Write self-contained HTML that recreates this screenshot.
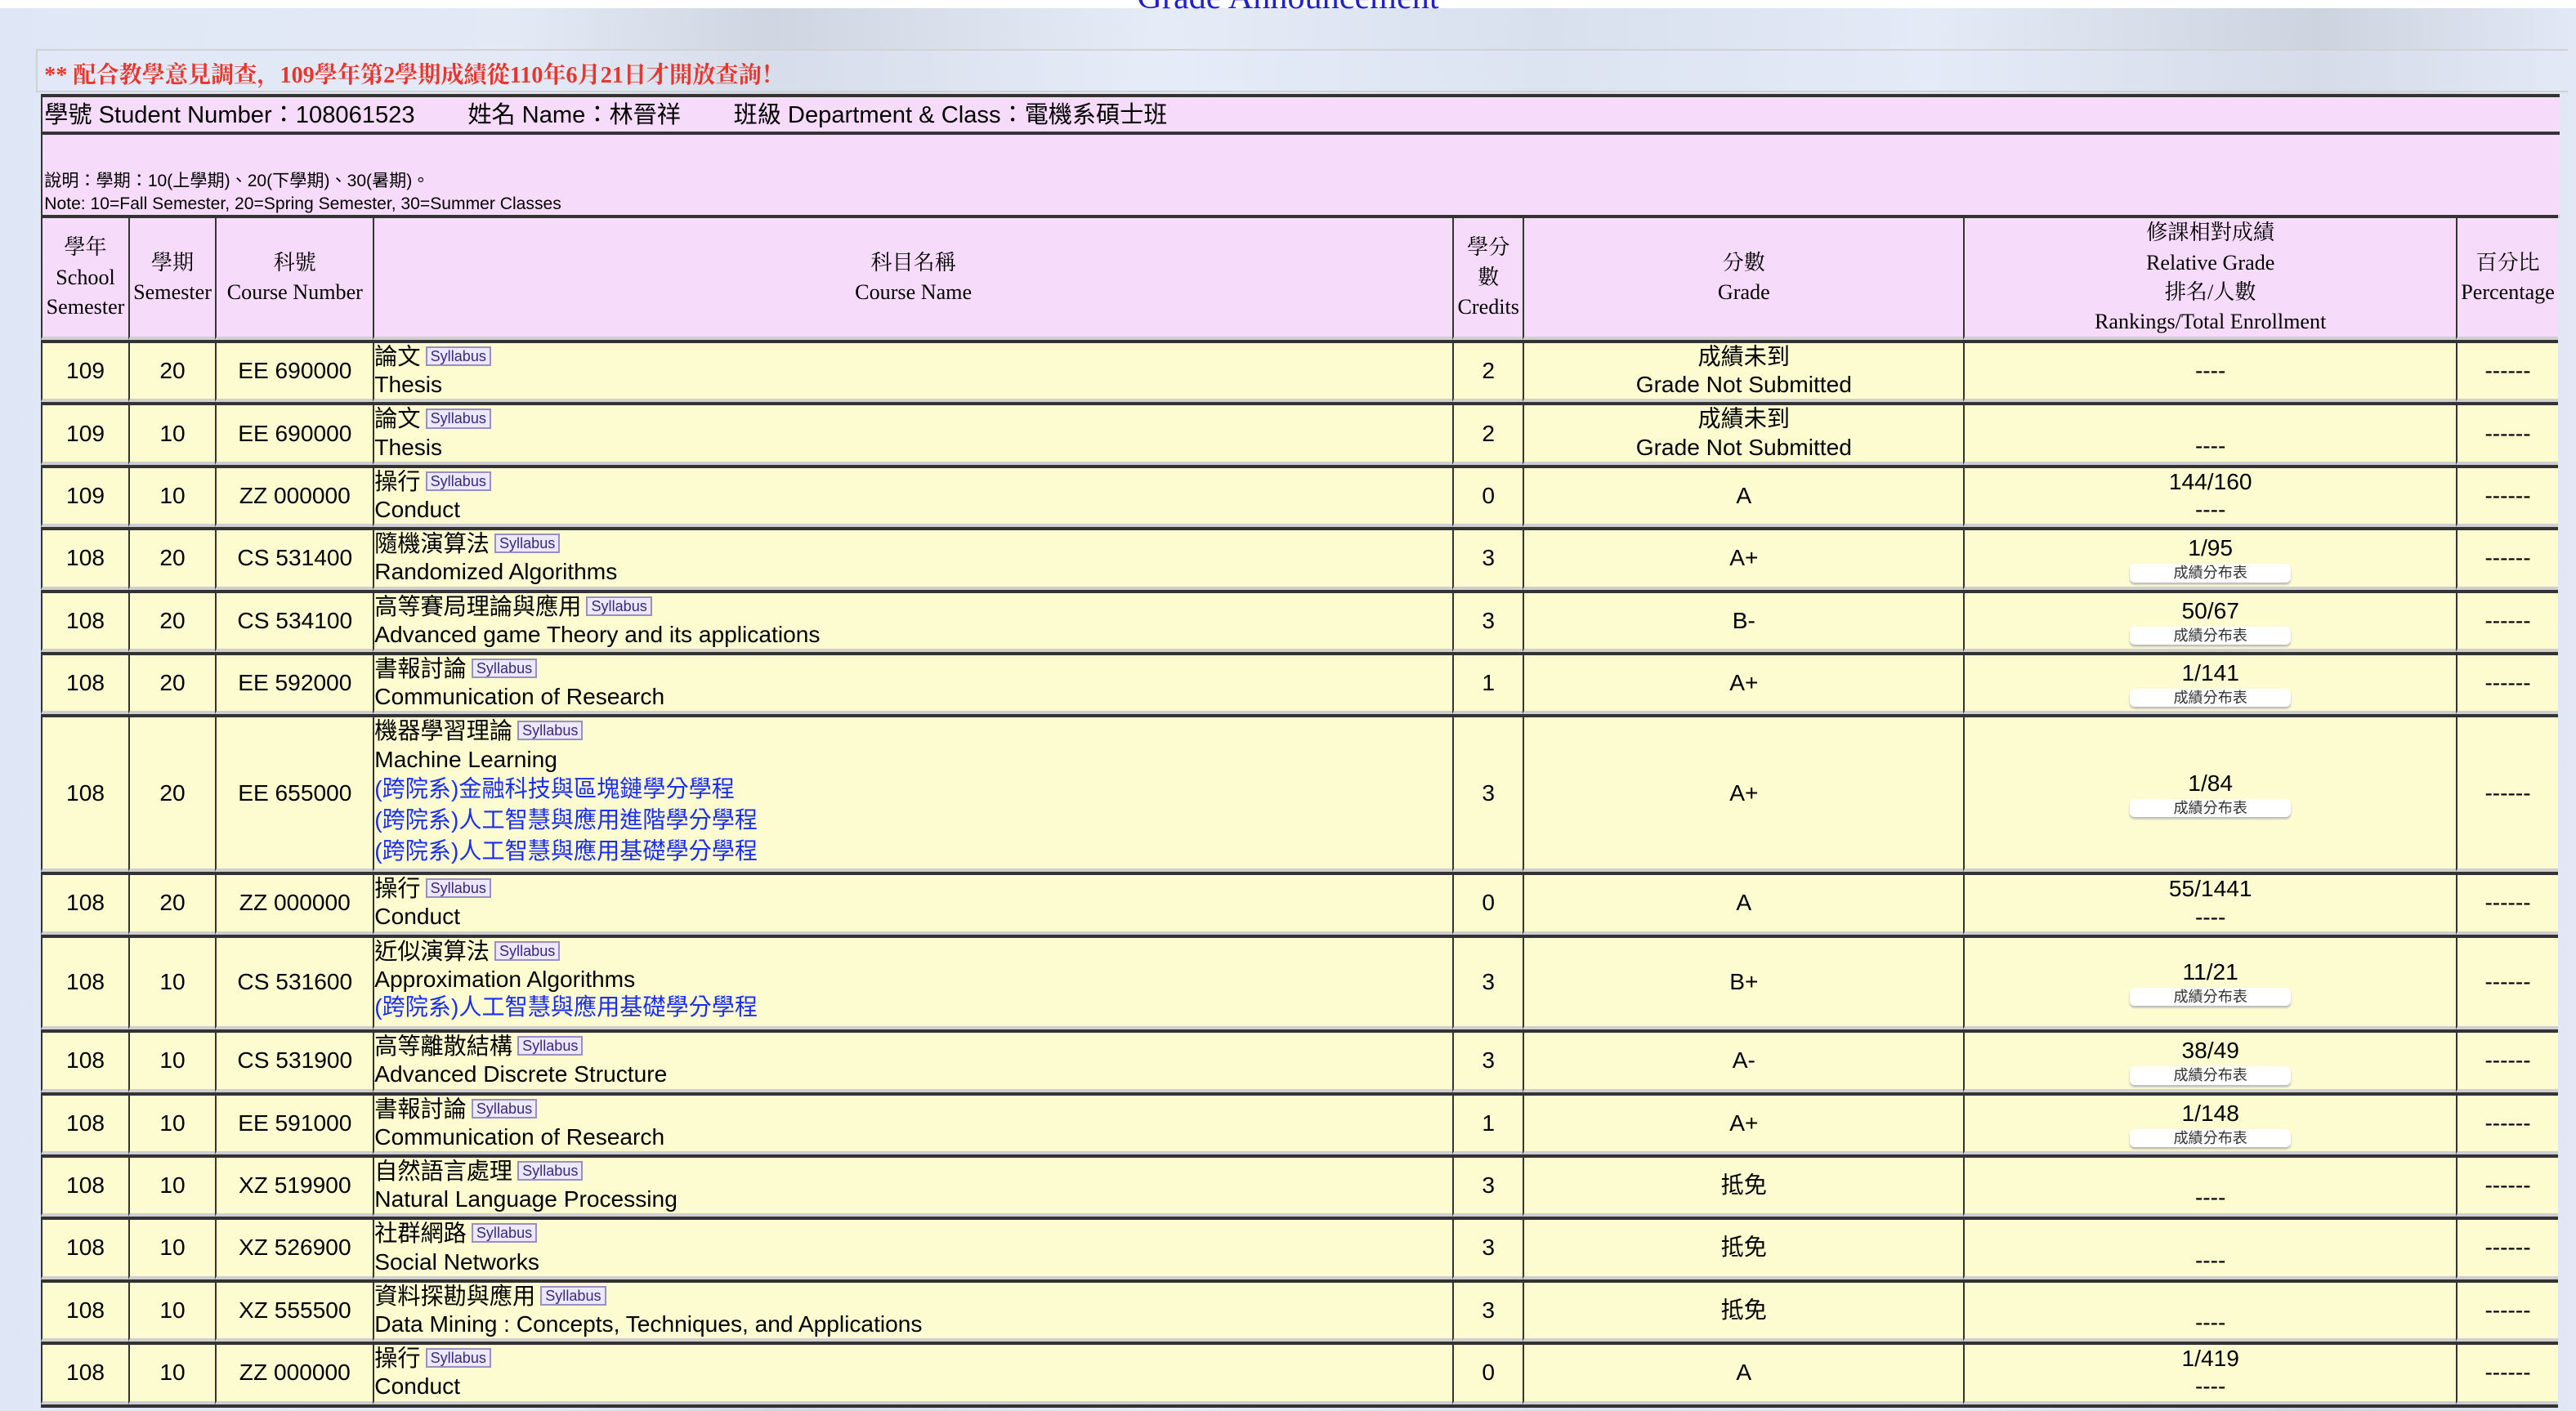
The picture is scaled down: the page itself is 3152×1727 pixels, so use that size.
<!DOCTYPE html>
<html><head><meta charset="utf-8">
<style>
html,body{margin:0;padding:0}
body{width:1568px;height:857px;overflow:hidden;zoom:2.0102;
background:linear-gradient(90deg,#dfe7f6 0%,#e3e9f5 20%,#cfd6e2 30%,#e6ecf7 45%,#d8e0ee 60%,#e4eaf6 75%,#cdd4df 90%,#e2e8f5 100%);
font-family:"Liberation Sans","Noto Sans CJK TC",sans-serif;position:relative}
.topwhite{position:absolute;left:0;top:0;width:1568px;height:5px;background:#fff;z-index:2}
.title{position:absolute;left:0;width:1568px;top:-14px;text-align:center;font:21px "Liberation Serif","Noto Serif CJK SC",serif;color:#2020d0;z-index:3}
.notice{position:absolute;left:22px;top:30px;width:1540px;height:24px;border:1px solid #d2d2d2;border-right:none;background:rgba(230,236,248,.35)}
.notice span{position:absolute;left:4px;top:4px;font:bold 14px "Liberation Serif","Noto Serif CJK SC",serif;color:#e8362e;white-space:nowrap}
.info{position:absolute;left:25px;top:57px;width:1532px;background:#f7dbfb;border-top:2px solid #333;border-left:1px solid #333}
.info1{height:21px;border-bottom:2px solid #cfcfcf;font-size:14.5px;line-height:22px;white-space:pre;padding-left:1px}
.info2{position:absolute;left:25px;top:80px;width:1532px;height:49px;background:#f7dbfb;border-top:2px solid #333;border-left:1px solid #333;border-bottom:2px solid #cfcfcf;font-size:10.5px;line-height:13px}
.info2 div{position:absolute;left:1px}
table{position:absolute;left:25px;top:131px;border-spacing:0;table-layout:fixed;width:1532px}
td{box-sizing:border-box;border-top:2px solid #333;border-bottom:2px solid #cfcfcf;border-left:1px solid #333;padding:0;text-align:center;vertical-align:middle;font-size:14px;background:#fdfbd0;line-height:17px;overflow:hidden}
tr.h td{background:#f7dbfb;font:13px/18px "Liberation Serif","Noto Serif CJK TC",serif}
td.c{text-align:left;vertical-align:top}
.s{display:inline-block;font-size:9px;line-height:10px;padding:0 2px;background:#ece8ff;border:1px solid #9a8fc4;color:#3a2a7a;vertical-align:2px;margin-left:3px}
.b{display:block;margin:1px auto 0;width:98px;height:11px;background:#fff;border-radius:3px;box-shadow:0 1px 1px #bbb;font-size:9px;line-height:11px;color:#333}
a{color:#1a2ef0;text-decoration:none}
.r{vertical-align:bottom;padding-bottom:1px}
</style></head><body>
<div class="topwhite"></div>
<div class="title">Grade Announcement</div>
<div class="notice"><span>** 配合教學意見調查，109學年第2學期成績從110年6月21日才開放查詢！</span></div>
<div class="info"><div class="info1">學號 Student Number：108061523        姓名 Name：林晉祥        班級 Department &amp; Class：電機系碩士班</div></div>
<div class="info2"><div style="top:22px">說明：學期：10(上學期)、20(下學期)、30(暑期)。</div><div style="top:36px">Note: 10=Fall Semester, 20=Spring Semester, 30=Summer Classes</div></div>
<table>
<colgroup><col style="width:53px"><col style="width:53px"><col style="width:96px"><col style="width:657px"><col style="width:43px"><col style="width:268px"><col style="width:300px"><col style="width:62px"></colgroup>
<tr class="h" style="height:76px"><td>學年<br>School<br>Semester</td><td>學期<br>Semester</td><td>科號<br>Course Number</td><td>科目名稱<br>Course Name</td><td>學分<br>數<br>Credits</td><td>分數<br>Grade</td><td>修課相對成績<br>Relative Grade<br>排名/人數<br>Rankings/Total Enrollment</td><td>百分比<br>Percentage</td></tr>
<tr style="height:38px"><td>109</td><td>20</td><td>EE 690000</td><td class="c">論文<span class="s">Syllabus</span><br>Thesis</td><td>2</td><td>成績未到<br>Grade Not Submitted</td><td>----</td><td>------</td></tr>
<tr style="height:38px"><td>109</td><td>10</td><td>EE 690000</td><td class="c">論文<span class="s">Syllabus</span><br>Thesis</td><td>2</td><td>成績未到<br>Grade Not Submitted</td><td class="r">----</td><td>------</td></tr>
<tr style="height:38px"><td>109</td><td>10</td><td>ZZ 000000</td><td class="c">操行<span class="s">Syllabus</span><br>Conduct</td><td>0</td><td>A</td><td>144/160<br>----</td><td>------</td></tr>
<tr style="height:38px"><td>108</td><td>20</td><td>CS 531400</td><td class="c">隨機演算法<span class="s">Syllabus</span><br>Randomized Algorithms</td><td>3</td><td>A+</td><td>1/95<span class="b">成績分布表</span></td><td>------</td></tr>
<tr style="height:38px"><td>108</td><td>20</td><td>CS 534100</td><td class="c">高等賽局理論與應用<span class="s">Syllabus</span><br>Advanced game Theory and its applications</td><td>3</td><td>B-</td><td>50/67<span class="b">成績分布表</span></td><td>------</td></tr>
<tr style="height:38px"><td>108</td><td>20</td><td>EE 592000</td><td class="c">書報討論<span class="s">Syllabus</span><br>Communication of Research</td><td>1</td><td>A+</td><td>1/141<span class="b">成績分布表</span></td><td>------</td></tr>
<tr style="height:96px"><td>108</td><td>20</td><td>EE 655000</td><td class="c">機器學習理論<span class="s">Syllabus</span><br>Machine Learning<br><a style="line-height:19px">(跨院系)金融科技與區塊鏈學分學程</a><br><a style="line-height:19px">(跨院系)人工智慧與應用進階學分學程</a><br><a style="line-height:19px">(跨院系)人工智慧與應用基礎學分學程</a></td><td>3</td><td>A+</td><td>1/84<span class="b">成績分布表</span></td><td>------</td></tr>
<tr style="height:38px"><td>108</td><td>20</td><td>ZZ 000000</td><td class="c">操行<span class="s">Syllabus</span><br>Conduct</td><td>0</td><td>A</td><td>55/1441<br>----</td><td>------</td></tr>
<tr style="height:58px"><td>108</td><td>10</td><td>CS 531600</td><td class="c">近似演算法<span class="s">Syllabus</span><br>Approximation Algorithms<br><a>(跨院系)人工智慧與應用基礎學分學程</a></td><td>3</td><td>B+</td><td>11/21<span class="b">成績分布表</span></td><td>------</td></tr>
<tr style="height:38px"><td>108</td><td>10</td><td>CS 531900</td><td class="c">高等離散結構<span class="s">Syllabus</span><br>Advanced Discrete Structure</td><td>3</td><td>A-</td><td>38/49<span class="b">成績分布表</span></td><td>------</td></tr>
<tr style="height:38px"><td>108</td><td>10</td><td>EE 591000</td><td class="c">書報討論<span class="s">Syllabus</span><br>Communication of Research</td><td>1</td><td>A+</td><td>1/148<span class="b">成績分布表</span></td><td>------</td></tr>
<tr style="height:38px"><td>108</td><td>10</td><td>XZ 519900</td><td class="c">自然語言處理<span class="s">Syllabus</span><br>Natural Language Processing</td><td>3</td><td>抵免</td><td class="r">----</td><td>------</td></tr>
<tr style="height:38px"><td>108</td><td>10</td><td>XZ 526900</td><td class="c">社群網路<span class="s">Syllabus</span><br>Social Networks</td><td>3</td><td>抵免</td><td class="r">----</td><td>------</td></tr>
<tr style="height:38px"><td>108</td><td>10</td><td>XZ 555500</td><td class="c">資料探勘與應用<span class="s">Syllabus</span><br>Data Mining : Concepts, Techniques, and Applications</td><td>3</td><td>抵免</td><td class="r">----</td><td>------</td></tr>
<tr style="height:38px"><td>108</td><td>10</td><td>ZZ 000000</td><td class="c">操行<span class="s">Syllabus</span><br>Conduct</td><td>0</td><td>A</td><td>1/419<br>----</td><td>------</td></tr>
<tr style="height:4px"><td colspan="8" style="background:transparent;border-bottom:none;border-left:none"></td></tr>
</table>
</body></html>
